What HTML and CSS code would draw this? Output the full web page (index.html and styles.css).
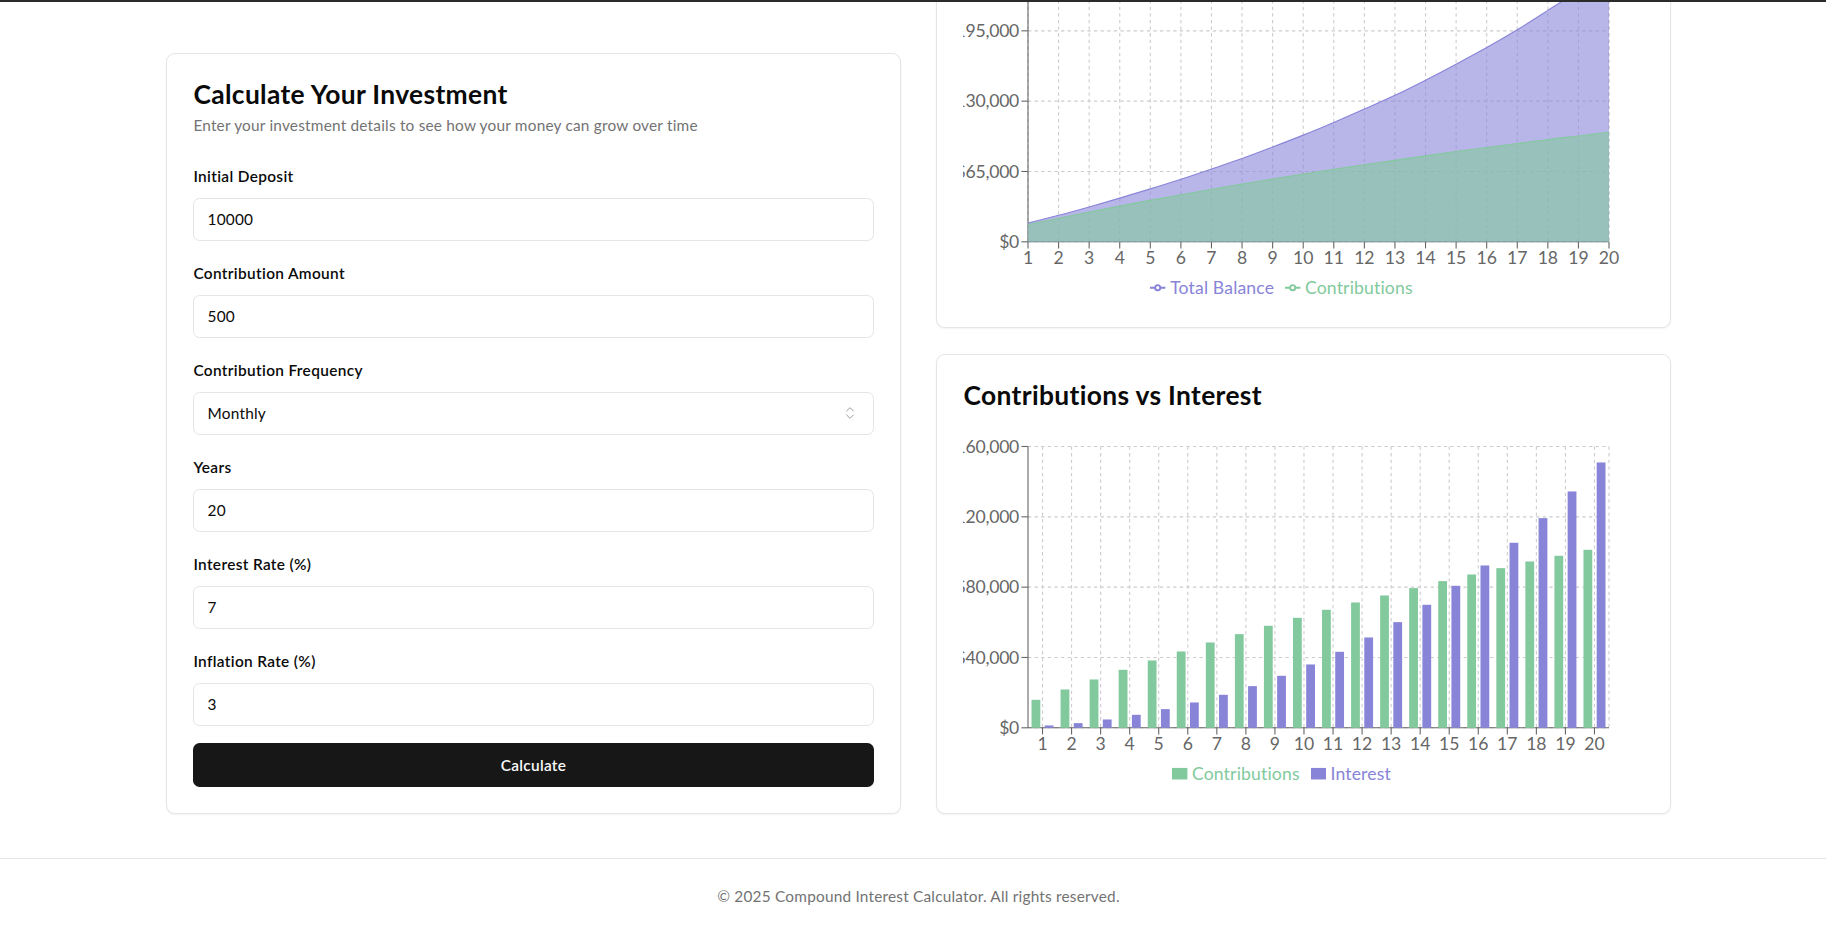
FILE: index.html
```html
<!DOCTYPE html>
<html lang="en">
<head>
<meta charset="utf-8">
<title>Compound Interest Calculator</title>
<link rel="stylesheet" href="styles.css">
</head>
<body>
<div class="topline"></div>
<main class="main">
  <div class="layout">
    <section class="card form-card">
      <div class="card-header">
        <h2 class="card-title">Calculate Your Investment</h2>
        <p class="card-desc">Enter your investment details to see how your money can grow over time</p>
      </div>
      <div class="card-content">
        <div class="fields">
          <div class="field">
            <label class="label" for="deposit">Initial Deposit</label>
            <input class="input" id="deposit" type="text" value="10000">
          </div>
          <div class="field">
            <label class="label" for="contrib">Contribution Amount</label>
            <input class="input" id="contrib" type="text" value="500">
          </div>
          <div class="field">
            <span class="label">Contribution Frequency</span>
            <button class="input select" type="button">
              <span>Monthly</span>
              <svg class="chev" viewBox="0 0 24 24"><path d="m7 15 5 5 5-5"/><path d="m7 9 5-5 5 5"/></svg>
            </button>
          </div>
          <div class="field">
            <label class="label" for="years">Years</label>
            <input class="input" id="years" type="text" value="20">
          </div>
          <div class="field">
            <label class="label" for="rate">Interest Rate (%)</label>
            <input class="input" id="rate" type="text" value="7">
          </div>
          <div class="field">
            <label class="label" for="inflation">Inflation Rate (%)</label>
            <input class="input" id="inflation" type="text" value="3">
          </div>
        </div>
        <button class="btn" type="button">Calculate</button>
      </div>
    </section>

    <div class="charts">
      <section class="card chart-card">
        <div class="chart-content chart-content-top">
          <svg class="chart-svg" id="growth-chart" viewBox="0 0 680 326"></svg>
          <ul class="legend">
            <li class="legend-item purple">
              <svg class="legend-icon" viewBox="0 0 32 32"><path d="M0,16h10.667A5.333,5.333,0,1,1,21.333,16H32M21.333,16A5.333,5.333,0,1,1,10.667,16" fill="none" stroke="#8884d8" stroke-width="4"/></svg>
              <span>Total Balance</span>
            </li>
            <li class="legend-item green">
              <svg class="legend-icon" viewBox="0 0 32 32"><path d="M0,16h10.667A5.333,5.333,0,1,1,21.333,16H32M21.333,16A5.333,5.333,0,1,1,10.667,16" fill="none" stroke="#82ca9d" stroke-width="4"/></svg>
              <span>Contributions</span>
            </li>
          </ul>
        </div>
      </section>

      <section class="card chart-card">
        <div class="card-header">
          <h2 class="card-title">Contributions vs Interest</h2>
        </div>
        <div class="chart-content">
          <svg class="chart-svg" id="bar-chart" viewBox="0 0 680 326"></svg>
          <ul class="legend">
            <li class="legend-item green">
              <svg class="legend-icon" viewBox="0 0 32 32"><path d="M0,4h32v24h-32z" fill="#82ca9d"/></svg>
              <span>Contributions</span>
            </li>
            <li class="legend-item purple">
              <svg class="legend-icon" viewBox="0 0 32 32"><path d="M0,4h32v24h-32z" fill="#8884d8"/></svg>
              <span>Interest</span>
            </li>
          </ul>
        </div>
      </section>
    </div>
  </div>
</main>
<footer class="footer">
  <div class="footer-inner">
    <p>© 2025 Compound Interest Calculator. All rights reserved.</p>
  </div>
</footer>
<script src="script.js"></script>
</body>
</html>
```

FILE: styles.css
```css
* { box-sizing: border-box; }
html, body { height: 100%; }
body {
  margin: 0;
  overflow: hidden;
  display: flex;
  flex-direction: column;
  justify-content: flex-end;
  font-family: Lato, "Noto Sans", sans-serif;
  color: #0a0a0a;
  background: #fff;
}
.topline {
  position: fixed;
  top: 0;
  left: 0;
  right: 0;
  height: 2px;
  background: #2b2b2b;
  z-index: 10;
}

.main {
  flex-shrink: 0;
  padding: 44px 155px 44px 166px;
}
.layout {
  display: grid;
  grid-template-columns: 1fr 1fr;
  column-gap: 35.2px;
}
.card {
  background: #fff;
  border: 1px solid #e5e5e5;
  border-radius: 8.8px;
  box-shadow: 0 1px 2px rgba(0, 0, 0, 0.05);
}
.form-card { align-self: end; }
.card-header { padding: 26.4px; }
.card-title {
  margin: 0;
  font-size: 26.4px;
  line-height: 1;
  font-weight: 700;
  letter-spacing: 0.34px;
}
.card-desc {
  margin: 6.6px 0 0;
  font-size: 15.4px;
  line-height: 22px;
  color: #737373;
  letter-spacing: 0.2px;
}
.card-content { padding: 0 26.4px 25.5px; }
.fields {
  display: flex;
  flex-direction: column;
  gap: 21px;
  padding-top: 2.7px;
}
.field {
  display: flex;
  flex-direction: column;
  gap: 11px;
}
.label {
  font-size: 15.4px;
  line-height: 22px;
  font-weight: 600;
  letter-spacing: 0.35px;
}
.input {
  height: 43px;
  width: 100%;
  border: 1px solid #e5e5e5;
  border-radius: 6.6px;
  padding: 0 13.2px;
  font-family: inherit;
  font-size: 15.4px;
  letter-spacing: 0.2px;
  color: #0a0a0a;
  background: #fff;
  display: flex;
  align-items: center;
  outline: none;
}
.select {
  justify-content: space-between;
  padding-right: 14.5px;
  text-align: left;
}
.chev {
  width: 16px;
  height: 16px;
  fill: none;
  stroke: #9a9a9a;
  stroke-width: 1.5;
  stroke-linecap: round;
  stroke-linejoin: round;
}
.btn {
  display: block;
  width: 100%;
  height: 44px;
  margin-top: 17.7px;
  border: 0;
  border-radius: 6.6px;
  background: #171717;
  color: #fafafa;
  font-family: inherit;
  font-size: 15.4px;
  font-weight: 600;
  letter-spacing: 0.3px;
}

.charts {
  display: flex;
  flex-direction: column;
  gap: 26.4px;
}
.chart-content { padding: 0 26.4px 26.4px; }
.chart-content-top { padding-top: 26.4px; }
.chart-svg {
  display: block;
  width: 680px;
  height: 326px;
  overflow: hidden;
}
.legend {
  display: flex;
  justify-content: center;
  align-items: center;
  height: 25.9px;
  margin: 0;
  padding: 0 33px 0 0;
  list-style: none;
}
.legend-item {
  display: flex;
  align-items: center;
  margin-right: 11px;
  font-size: 17.6px;
  line-height: 1;
  letter-spacing: 0.15px;
}
.legend-item.purple { color: #8884d8; }
.legend-item.green { color: #82ca9d; }
.legend-icon {
  width: 15.4px;
  height: 15.4px;
  margin-right: 4.4px;
}

.grid-line { stroke: #ccc; stroke-width: 1.1; stroke-dasharray: 3.3 3.3; }
.axis-line { stroke: #666; stroke-width: 1.1; }
.tick-label { fill: #666; font-size: 17.6px; }
.tick-label.y-label { letter-spacing: -0.25px; }
.area-purple { fill: #8884d8; fill-opacity: 0.6; }
.area-green { fill: #82ca9d; fill-opacity: 0.6; }
.line-purple { fill: none; stroke: #8884d8; stroke-width: 1.1; }
.line-green { fill: none; stroke: #82ca9d; stroke-width: 1.1; }
.bar-green { fill: #82ca9d; }
.bar-purple { fill: #8884d8; }

.footer {
  flex-shrink: 0;
  border-top: 1px solid #e5e5e5;
}
.footer-inner {
  padding: 26.4px 155px 22.8px 166px;
  text-align: center;
  font-size: 15.4px;
  line-height: 22px;
  letter-spacing: 0.2px;
  color: #737373;
}
.footer-inner p { margin: 0; }
```

FILE: script.js
```js
(function () {
  var NS = 'http://www.w3.org/2000/svg';
  var contrib = [15926, 21802, 27490, 32990, 38297, 43416, 48536, 53280, 58018, 62568,
                 67118, 71288, 75269, 79444, 83426, 87214, 90820, 94608, 97834, 101246];
  var interest = [1325, 2656, 4738, 7394, 10619, 14408, 18770, 23702, 29578, 36022,
                  43229, 51380, 60105, 69962, 80770, 92333, 105228, 119260, 134424, 150920];
  var X0 = 65, X1 = 646, Y0 = 11.5, Y1 = 292.8;
  var TICK = 6.6;

  function el(tag, attrs, parent, text) {
    var e = document.createElementNS(NS, tag);
    for (var k in attrs) e.setAttribute(k, attrs[k]);
    if (text !== undefined) e.textContent = text;
    parent.appendChild(e);
    return e;
  }
  function fmt(v) { return '$' + v.toLocaleString('en-US'); }

  function frame(svg, xs, yTicks, max) {
    var grid = el('g', {}, svg);
    yTicks.forEach(function (t) {
      var y = Y1 - t / max * (Y1 - Y0);
      el('line', { 'class': 'grid-line', x1: X0, x2: X1, y1: y, y2: y }, grid);
    });
    xs.concat([X1]).forEach(function (x) {
      el('line', { 'class': 'grid-line', x1: x, x2: x, y1: Y0, y2: Y1 }, grid);
    });
    var ax = el('g', {}, svg);
    el('line', { 'class': 'axis-line', x1: X0, x2: X0, y1: Y0, y2: Y1 }, ax);
    yTicks.forEach(function (t) {
      var y = Y1 - t / max * (Y1 - Y0);
      el('line', { 'class': 'axis-line', x1: X0 - TICK, x2: X0, y1: y, y2: y }, ax);
      el('text', { 'class': 'tick-label y-label', x: X0 - TICK - 2.35, y: y + 6.3, 'text-anchor': 'end' }, ax, fmt(t));
    });
    el('line', { 'class': 'axis-line', x1: X0, x2: X1, y1: Y1, y2: Y1 }, ax);
    xs.forEach(function (x, i) {
      el('line', { 'class': 'axis-line', x1: x, x2: x, y1: Y1, y2: Y1 + TICK }, ax);
      el('text', { 'class': 'tick-label', x: x, y: 315, 'text-anchor': 'middle' }, ax, String(i + 1));
    });
  }

  function sign(v) { return v < 0 ? -1 : 1; }
  function monotone(pts) {
    var n = pts.length, t = new Array(n), i;
    for (i = 1; i < n - 1; i++) {
      var h0 = pts[i][0] - pts[i - 1][0], h1 = pts[i + 1][0] - pts[i][0];
      var s0 = (pts[i][1] - pts[i - 1][1]) / h0, s1 = (pts[i + 1][1] - pts[i][1]) / h1;
      var p = (s0 * h1 + s1 * h0) / (h0 + h1);
      t[i] = (sign(s0) + sign(s1)) * Math.min(Math.abs(s0), Math.abs(s1), 0.5 * Math.abs(p)) || 0;
    }
    var hA = pts[1][0] - pts[0][0];
    t[0] = (3 * (pts[1][1] - pts[0][1]) / hA - t[1]) / 2;
    var hB = pts[n - 1][0] - pts[n - 2][0];
    t[n - 1] = (3 * (pts[n - 1][1] - pts[n - 2][1]) / hB - t[n - 2]) / 2;
    var d = 'M' + pts[0][0] + ',' + pts[0][1];
    for (i = 0; i < n - 1; i++) {
      var dx = (pts[i + 1][0] - pts[i][0]) / 3;
      d += 'C' + (pts[i][0] + dx) + ',' + (pts[i][1] + dx * t[i]) + ',' +
        (pts[i + 1][0] - dx) + ',' + (pts[i + 1][1] - dx * t[i + 1]) + ',' +
        pts[i + 1][0] + ',' + pts[i + 1][1];
    }
    return d;
  }

  // Growth (area) chart
  var g = document.getElementById('growth-chart');
  var gMax = 260000;
  var step = (X1 - X0) / 19;
  var gx = contrib.map(function (_, i) { return X0 + i * step; });
  frame(g, gx, [0, 65000, 130000, 195000, 260000], gMax);
  function series(vals) {
    return vals.map(function (v, i) { return [gx[i], Y1 - v / gMax * (Y1 - Y0)]; });
  }
  var totals = contrib.map(function (c, i) { return c + interest[i]; });
  [[totals, 'purple'], [contrib, 'green']].forEach(function (s) {
    var line = monotone(series(s[0]));
    el('path', { 'class': 'area-' + s[1], d: line + 'L' + X1 + ',' + Y1 + 'L' + X0 + ',' + Y1 + 'Z' }, g);
    el('path', { 'class': 'line-' + s[1], d: line }, g);
  });

  // Bar chart
  var b = document.getElementById('bar-chart');
  var bMax = 160000;
  var band = (X1 - X0) / 20;
  var bx = contrib.map(function (_, i) { return X0 + band * (i + 0.5); });
  frame(b, bx, [0, 40000, 80000, 120000, 160000], bMax);
  var bars = el('g', {}, b);
  contrib.forEach(function (c, i) {
    var start = X0 + band * i;
    var hc = c / bMax * (Y1 - Y0);
    var hi = interest[i] / bMax * (Y1 - Y0);
    el('rect', { 'class': 'bar-green', x: start + 3.53, y: Y1 - hc, width: 8.8, height: hc }, bars);
    el('rect', { 'class': 'bar-purple', x: start + 16.73, y: Y1 - hi, width: 8.8, height: hi }, bars);
  });
})();
```
